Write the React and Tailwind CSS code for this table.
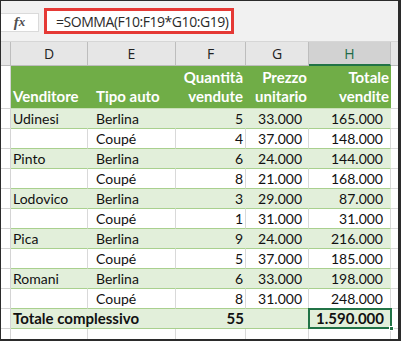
import React from 'react';

const rows = [
  ['Udinesi', 'Berlina', '5', '33.000', '165.000'],
  ['', 'Coupé', '4', '37.000', '148.000'],
  ['Pinto', 'Berlina', '6', '24.000', '144.000'],
  ['', 'Coupé', '8', '21.000', '168.000'],
  ['Lodovico', 'Berlina', '3', '29.000', '87.000'],
  ['', 'Coupé', '1', '31.000', '31.000'],
  ['Pica', 'Berlina', '9', '24.000', '216.000'],
  ['', 'Coupé', '5', '37.000', '185.000'],
  ['Romani', 'Berlina', '6', '33.000', '198.000'],
  ['', 'Coupé', '8', '31.000', '248.000']
];

const grid = 'grid grid-cols-[10px_77px_88px_70px_63px_82px_1fr]';

const DataRow = ({ row, striped }) => {
  const fill = striped ? 'bg-[#e2efda] border-r-[#e2efda]' : 'bg-white border-r-[#d9d9d9]';
  const cell = `h-[20px] border-b border-b-[#a9d08e] border-r flex items-center ${fill}`;
  return (
    <div className={grid}>
      <div className="h-[20px] border-b border-r border-[#d4d4d4] bg-white" />
      <div className={`${cell} pl-[2px]`}>{row[0]}</div>
      <div className={`${cell} pl-[8px]`}>{row[1]}</div>
      <div className={`${cell} justify-end pr-[2px]`}>{row[2]}</div>
      <div className={`${cell} justify-end pr-[6px]`}>{row[3]}</div>
      <div className={`${cell} justify-end pr-[7px] border-r-[#d9d9d9]`}>{row[4]}</div>
      <div className="h-[20px] border-b border-[#d9d9d9] bg-white" />
    </div>
  );
};

export default function App() {
  return (
    <div
      className="w-[401px] h-[341px] overflow-hidden bg-white border-t border-l border-r-[3px] border-b-[2px] border-[#2b2b2b] text-[14px] text-[#111]"
      style={{ fontFamily: 'Lato, "Open Sans", sans-serif' }}
    >
      {/* formula bar */}
      <div className="h-[41px] bg-[#f1f1f1] border-b border-[#d6d6d6] flex items-center">
        <div className="w-[38px] h-[19px] mt-[2px] bg-white border border-l-0 border-[#dadada] flex items-center justify-center text-[#505050] text-[15px] italic font-semibold" style={{ fontFamily: '"Liberation Serif", serif' }}>
          f<span className="text-[13px]">x</span>
        </div>
        <div className="ml-[5px] w-[190px] h-[26px] bg-white border-[3px] border-[#e53935] flex items-center pl-[9px] text-[14px] tracking-[-0.45px] text-[#2a2a2a]" style={{ fontFamily: '"Open Sans", sans-serif' }}>
          =SOMMA(F10:F19*G10:G19)
        </div>
      </div>

      {/* column headers */}
      <div className={`${grid} h-[24px] bg-[#e6e6e6] text-[14px] text-[#222]`} style={{ fontFamily: '"Open Sans", sans-serif' }}>
        <div className="border-r border-b border-[#bdbdbd]" />
        <div className="border-r border-b border-[#bdbdbd] flex items-center justify-center">D</div>
        <div className="border-r border-b border-[#bdbdbd] flex items-center justify-center">E</div>
        <div className="border-r border-b border-[#bdbdbd] flex items-center justify-center">F</div>
        <div className="border-r border-b border-[#bdbdbd] flex items-center justify-center">G</div>
        <div className="border-r border-[#bdbdbd] border-b-2 border-b-[#217346] bg-[#d2d2d2] flex items-center justify-center text-[#1e6b48]">H</div>
        <div className="border-b border-[#bdbdbd]" />
      </div>

      {/* table header */}
      <div className={grid}>
        <div className="h-[43px] border-r border-b border-[#d4d4d4] bg-white" />
        <div className="col-span-5 grid grid-cols-[77px_88px_70px_63px_82px] h-[43px] bg-[#70ad47] border-b border-[#c9e0b8] text-white text-[15px] font-bold leading-[19px] pb-[2px]">
          <div className="flex items-end pl-[2px]">Venditore</div>
          <div className="flex items-end pl-[8px]">Tipo auto</div>
          <div className="flex flex-col items-end justify-end pr-[3px]">
            <span>Quantità</span>
            <span>vendute</span>
          </div>
          <div className="flex flex-col items-end justify-end pr-[2px]">
            <span>Prezzo</span>
            <span>unitario</span>
          </div>
          <div className="flex flex-col items-end justify-end pr-[2px]">
            <span>Totale</span>
            <span>vendite</span>
          </div>
        </div>
        <div className="h-[43px] border-b border-[#d9d9d9] bg-white" />
      </div>

      {rows.map((row, i) => (
        <DataRow key={i} row={row} striped={i % 2 === 0} />
      ))}

      {/* total row */}
      <div className={`${grid} font-bold text-[15px]`}>
        <div className="h-[20px] border-b border-r border-[#d4d4d4] bg-white" />
        <div className="col-span-2 h-[20px] bg-[#e2efda] border-b border-[#a9d08e] flex items-center pl-[2px]">Totale complessivo</div>
        <div className="h-[20px] bg-[#e2efda] border-b border-[#a9d08e] flex items-center justify-end pr-[2px]">55</div>
        <div className="h-[20px] bg-[#e2efda] border-b border-[#a9d08e]" />
        <div className="relative h-[20px] bg-[#e2efda] border-b border-[#a9d08e]">
          <div className="absolute -left-[1px] -top-[1px] -right-[1px] -bottom-[1px] border-2 border-[#217346] flex items-center justify-end pr-[6px]">
            1.590.000
          </div>
          <div className="absolute -right-[3px] -bottom-[3px] w-[5px] h-[5px] bg-[#217346] border border-white" />
        </div>
        <div className="h-[20px] border-b border-[#d9d9d9] bg-white" />
      </div>

      {/* empty row */}
      <div className={grid}>
        <div className="h-[20px] border-r border-[#d4d4d4]" />
        <div className="h-[20px] border-r border-[#d9d9d9]" />
        <div className="h-[20px] border-r border-[#d9d9d9]" />
        <div className="h-[20px] border-r border-[#d9d9d9]" />
        <div className="h-[20px] border-r border-[#d9d9d9]" />
        <div className="h-[20px] border-r border-[#d9d9d9]" />
        <div className="h-[20px]" />
      </div>
    </div>
  );
}
